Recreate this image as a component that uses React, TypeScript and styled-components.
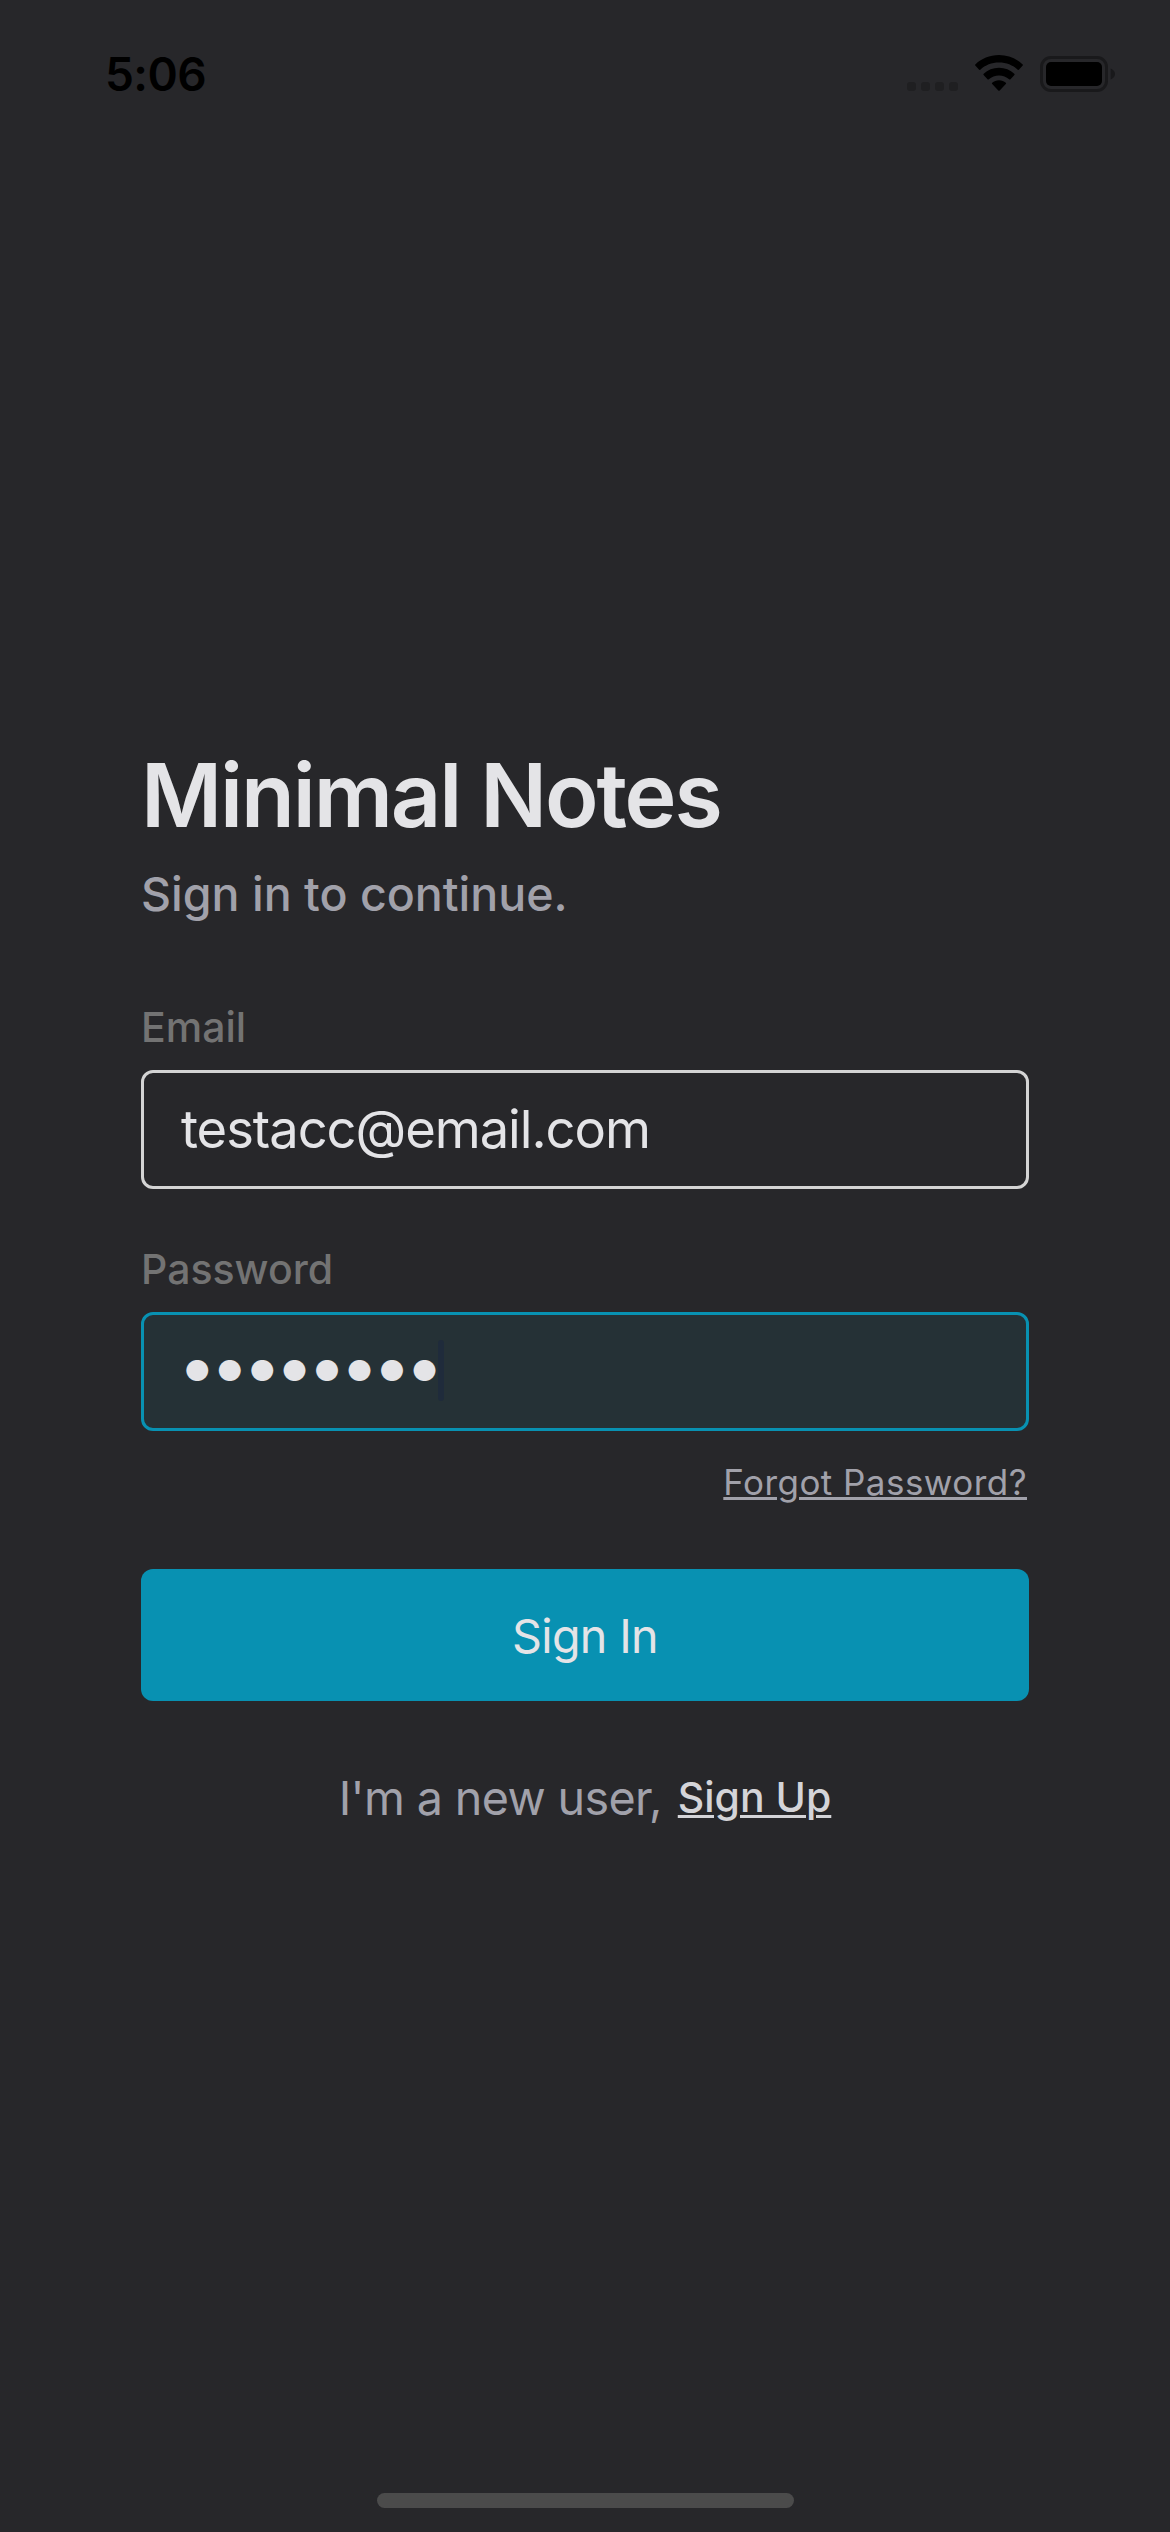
import React from "react";
import styled, { createGlobalStyle, css } from "styled-components";

const color = {
  background: "#27272a",
  accent: "#0891b2",
  text: "#e4e4e7",
  muted: "#a1a1aa",
  label: "#737373",
  border: "#d4d4d4",
  link: "#d4d4d8",
};

const GlobalStyle = createGlobalStyle`
  * { box-sizing: border-box; }
  body {
    margin: 0;
    background: ${color.background};
    font-family: Inter, "Liberation Sans", sans-serif;
  }
`;

const Screen = styled.div`
  display: flex;
  flex-direction: column;
  width: 1170px;
  height: 2532px;
  background: ${color.background};
  overflow: hidden;
`;

const StatusBar = styled.header`
  display: flex;
  align-items: center;
  justify-content: space-between;
  height: 102px;
  padding: 46px 55px 0 105px;
  color: #000;
`;

const Time = styled.span`
  font-size: 46px;
  font-weight: 600;
  line-height: 56px;
  letter-spacing: -0.6px;
`;

const StatusIcons = styled.div`
  display: flex;
  align-items: center;
  height: 36px;
`;

const SignalDots = styled.div`
  display: flex;
  gap: 5px;
  align-self: flex-end;
  margin: 0 17px 1px 0;
`;

const SignalDot = styled.i`
  width: 9px;
  height: 9px;
  border-radius: 3px;
  background: #1f1f21;
`;

const WifiIcon = styled.svg`
  width: 48px;
  height: 36px;
  margin: -2px 17px 0 0;
`;

const BatteryIcon = styled.svg`
  width: 75px;
  height: 36px;
`;

const Main = styled.main`
  display: flex;
  flex-direction: column;
  flex: 1;
  width: 888px;
  margin: 643px auto 0;
`;

const Title = styled.h1`
  margin: 0;
  color: ${color.text};
  font-size: 88px;
  font-weight: 600;
  line-height: 100px;
  letter-spacing: -2.1px;
  white-space: nowrap;
`;

const Subtitle = styled.p`
  margin: 19px 0 0;
  color: ${color.muted};
  font-size: 46.5px;
  font-weight: 500;
  line-height: 60px;
`;

const Field = styled.div<{ $gap: number }>`
  display: flex;
  flex-direction: column;
  gap: 18px;
  margin-top: ${({ $gap }) => $gap}px;
`;

const Label = styled.label`
  color: ${color.label};
  font-size: 41px;
  font-weight: 500;
  line-height: 50px;
`;

const InputBox = styled.div<{ $focused?: boolean }>`
  display: flex;
  align-items: center;
  height: 119px;
  padding: 0 37px;
  border: 3px solid ${color.border};
  border-radius: 12px;
  color: ${color.text};
  ${({ $focused }) =>
    $focused &&
    css`
      border-color: ${color.accent};
      background: #253136;
    `}
`;

const Value = styled.span`
  margin-bottom: 2px;
  font-size: 52.5px;
  line-height: 64px;
  letter-spacing: -1.05px;
`;

const MaskedValue = styled.span`
  margin: 0 -6px 1px 3px;
  font-size: 29px;
  line-height: 64px;
  letter-spacing: 5.95px;
`;

const Caret = styled.i`
  width: 6px;
  height: 61px;
  margin-top: -3px;
  border-radius: 3px;
  background: #1f2b3b;
`;

const ForgotLink = styled.a`
  align-self: flex-end;
  margin: 27px 2px 0 0;
  color: ${color.muted};
  font-size: 35px;
  line-height: 48px;
  letter-spacing: 0.45px;
  text-decoration: underline;
  text-decoration-thickness: 3px;
  text-underline-offset: 2px;
`;

const SubmitButton = styled.button`
  height: 132px;
  margin-top: 63px;
  padding: 2px 0 0;
  border: 0;
  border-radius: 12px;
  background: ${color.accent};
  color: ${color.text};
  font-family: inherit;
  font-size: 46.7px;
  font-weight: 400;
  line-height: 60px;
  letter-spacing: -0.7px;
`;

const Footer = styled.div`
  display: flex;
  align-items: center;
  justify-content: center;
  gap: 16px;
  margin-top: 67px;
`;

const FooterText = styled.span`
  color: ${color.muted};
  font-size: 46.7px;
  line-height: 60px;
  letter-spacing: -0.65px;
`;

const SignUpLink = styled.a`
  margin-bottom: 2px;
  color: ${color.link};
  font-size: 41px;
  font-weight: 500;
  line-height: 50px;
  text-decoration: underline;
  text-decoration-thickness: 3px;
  text-underline-offset: 3px;
`;

const HomeIndicator = styled.div`
  align-self: center;
  width: 417px;
  height: 15px;
  margin-bottom: 24px;
  border-radius: 8px;
  background: #4b4b4b;
`;

export default function App() {
  return (
    <Screen>
      <GlobalStyle />
      <StatusBar>
        <Time>5:06</Time>
        <StatusIcons>
          <SignalDots>
            {[0, 1, 2, 3].map((n) => (
              <SignalDot key={n} />
            ))}
          </SignalDots>
          <WifiIcon viewBox="0 0 48 36">
            <path d="M24 0C14.700 0 6.300 3.600 0.300 9.400Q-0.200 10 0.300 10.600L3.900 14.600Q4.600 15.300 5.300 14.700C10.200 10.200 16.700 7.600 24 7.600S37.800 10.200 42.700 14.700Q43.400 15.300 44.100 14.600L47.700 10.600Q48.200 10 47.700 9.400C41.700 3.600 33.300 0 24 0Z" />
            <path d="M24 12.800C18 12.800 12.700 15 8.700 18.700Q8 19.400 8.600 20L12.500 24.200Q13.200 24.900 13.900 24.300C16.600 21.900 20.100 20.400 24 20.400S31.400 21.900 34.100 24.300Q34.800 24.900 35.500 24.200L39.400 20Q40 19.400 39.300 18.700C35.300 15 30 12.800 24 12.800Z" />
            <path d="M24 25.200C21.300 25.200 19 26.200 17.200 27.800Q16.600 28.400 17.200 29L23.300 35.400Q24 36.100 24.700 35.400L30.800 29Q31.400 28.400 30.800 27.800C29 26.200 26.700 25.200 24 25.200Z" />
          </WifiIcon>
          <BatteryIcon viewBox="0 0 75 36">
            <rect x="1.500" y="1.500" width="65" height="33" rx="9.500" fill="none" stroke="#19191b" strokeWidth="3" />
            <rect x="6" y="6" width="56" height="24" rx="5" />
            <path d="M70.700 12.500C73.300 13.500 75 15.500 75 18S73.300 22.500 70.700 23.500Z" fill="#19191b" />
          </BatteryIcon>
        </StatusIcons>
      </StatusBar>
      <Main>
        <Title>Minimal Notes</Title>
        <Subtitle>Sign in to continue.</Subtitle>
        <Field $gap={78}>
          <Label>Email</Label>
          <InputBox>
            <Value>testacc@email.com</Value>
          </InputBox>
        </Field>
        <Field $gap={55}>
          <Label>Password</Label>
          <InputBox $focused>
            <MaskedValue>●●●●●●●●</MaskedValue>
            <Caret />
          </InputBox>
        </Field>
        <ForgotLink>Forgot Password?</ForgotLink>
        <SubmitButton>Sign In</SubmitButton>
        <Footer>
          <FooterText>I'm a new user,</FooterText>
          <SignUpLink>Sign Up</SignUpLink>
        </Footer>
      </Main>
      <HomeIndicator />
    </Screen>
  );
}
